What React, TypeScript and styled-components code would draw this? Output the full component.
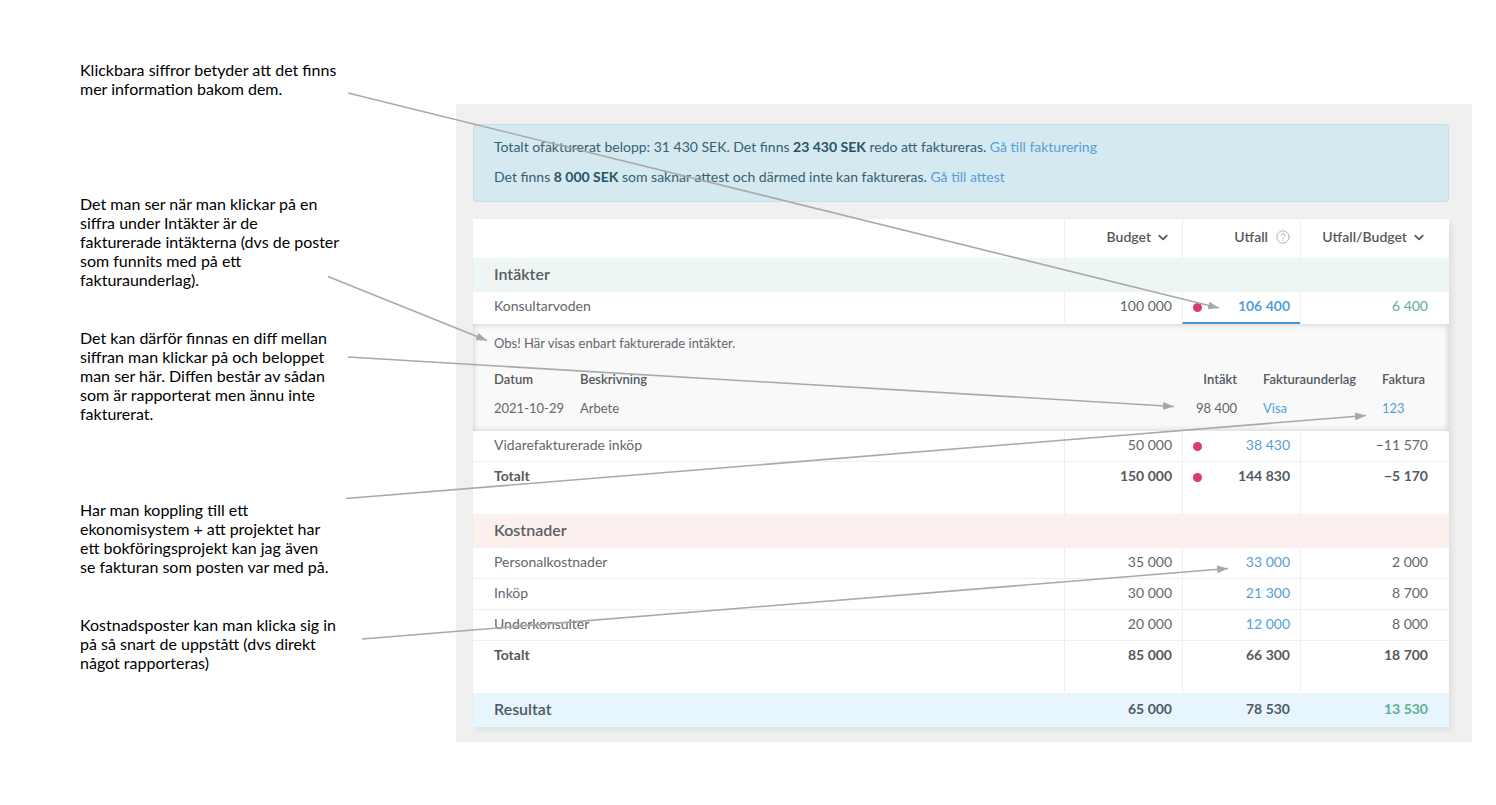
import React from 'react';
import styled, { createGlobalStyle, css } from 'styled-components';

const GlobalStyle = createGlobalStyle`
  * { box-sizing: border-box; }
  body {
    margin: 0;
    background: #ffffff;
    color: #000000;
    font-family: Lato, "Open Sans", sans-serif;
  }
`;

const Page = styled.main`
  position: relative;
  display: flex;
  align-items: flex-start;
  min-width: 1100px;
  padding-bottom: 63px;
`;

const Notes = styled.aside`
  flex: 0 0 456px;
  padding: 60px 0 0 80px;
`;

const Note = styled.p<{ $after: number }>`
  margin: 0 0 ${(p) => p.$after}px;
  font-size: 16px;
  line-height: 19px;
  white-space: pre-line;
`;

const Panel = styled.section`
  flex: 1;
  min-width: 0;
  margin: 104px 24px 0 0;
  padding: 20px 23px 15px 17px;
  background: #f0f0f0;
`;

const Alert = styled.div`
  display: flex;
  flex-direction: column;
  gap: 10px;
  margin-bottom: 17px;
  padding: 12px 20px 14px;
  border: 1px solid #c3e0e9;
  border-radius: 4px;
  background: #d5e9f1;
  color: #35606f;
  font-size: 14px;
  line-height: 20px;
`;

const AlertLine = styled.p`
  margin: 0;
`;

const Strong = styled.strong`
  font-weight: 700;
  color: #275463;
`;

const Link = styled.a`
  color: #559fd8;
  text-decoration: none;
`;

const Table = styled.table`
  width: 100%;
  table-layout: fixed;
  border-collapse: separate;
  border-spacing: 0;
  background: #ffffff;
  box-shadow: 3px 4px 6px rgba(0, 0, 0, 0.07);
  color: #63676c;
  font-size: 14px;
  line-height: 20px;
`;

const Col = styled.col<{ $width?: number }>`
  ${(p) => p.$width && css`width: ${p.$width}px;`}
`;

const HeadCell = styled.th`
  height: 39px;
  padding: 0 10px 4px 0;
  border-left: 1px solid #efefef;
  text-align: right;
  &:first-child { border-left: 0; }
  &:last-child { padding-right: 21px; }
`;

const HeadButton = styled.button`
  display: inline-flex;
  align-items: center;
  gap: 3px;
  padding: 0;
  border: 0;
  background: none;
  color: #54585d;
  font: inherit;
  font-weight: 600;
  line-height: 20px;
  vertical-align: middle;
`;

const HeadLabel = styled.span`
  display: inline-flex;
  align-items: center;
  gap: 8px;
  color: #54585d;
  font-weight: 600;
  vertical-align: middle;
`;

const HelpButton = styled.button`
  display: flex;
  padding: 0;
  border: 0;
  background: none;
`;

const SectionCell = styled.th<{ $tone: string }>`
  padding: 6px 21px 8px;
  background: ${(p) => p.$tone};
  color: #5a5e63;
  font-size: 16px;
  font-weight: 600;
  text-align: left;
`;

type Kind = 'line' | 'open' | 'total' | 'result';

const Row = styled.tr<{ $kind: Kind }>`
  > th, > td {
    padding: 4px 10px 6px;
    border-left: 1px solid #eeeff0;
    vertical-align: top;
    font-weight: 400;
    text-align: right;
  }
  > th {
    padding-left: 21px;
    border-left: 0;
    text-align: left;
  }
  > td:last-child { padding-right: 21px; }

  ${(p) => p.$kind === 'line' && css`
    > th, > td { border-bottom: 1px solid #eeeff0; }
  `}
  ${(p) => p.$kind === 'open' && css`
    > th, > td { border-bottom: 2px solid #ffffff; }
    > td:nth-child(3) {
      border-bottom-color: #4b93d3;
      font-weight: 700;
    }
  `}
  ${(p) => p.$kind === 'total' && css`
    > th, > td {
      padding-bottom: 28px;
      color: #55595e;
      font-weight: 700;
    }
  `}
  ${(p) => p.$kind === 'result' && css`
    > th, > td {
      padding-top: 6px;
      padding-bottom: 8px;
      border-left-color: #e7f5fe;
      background: #e7f5fe;
      color: #505962;
      font-weight: 700;
    }
    > th {
      font-size: 16px;
      font-weight: 600;
    }
  `}
`;

const Flagged = styled.div`
  display: flex;
  align-items: center;
  justify-content: space-between;
`;

const Dot = styled.span`
  width: 9px;
  height: 9px;
  margin-top: 2px;
  border-radius: 50%;
  background: #d93b72;
`;

const Positive = styled.span`
  color: #62b08c;
`;

const DetailCell = styled.td`
  padding: 9px 21px 13px;
  background: #f9f9f9;
  box-shadow: inset 0 0 6px rgba(0, 0, 0, 0.2);
  font-size: 13px;
`;

const DetailNote = styled.p`
  margin: 0 0 16px;
`;

const DetailTable = styled.table`
  width: 100%;
  table-layout: fixed;
  border-collapse: collapse;
  th, td {
    padding: 0;
    text-align: left;
  }
  th {
    padding-bottom: 9px;
    color: #54585d;
    font-weight: 600;
  }
  th:nth-child(3), td:nth-child(3) {
    padding-right: 26px;
    text-align: right;
  }
`;

const ArrowLayer = styled.svg`
  position: absolute;
  top: 0;
  left: 0;
  width: 100%;
  height: 805px;
  pointer-events: none;
`;

const Chevron = () => (
  <svg width="18" height="18" viewBox="0 0 18 18" fill="none" stroke="#54585d" strokeWidth="1.8" strokeLinecap="round" strokeLinejoin="round" aria-hidden="true">
    <path d="M5.2 7.6 9 11.3l3.8-3.7" />
  </svg>
);

const Help = () => (
  <svg width="14" height="14" viewBox="0 0 14 14" fill="none" stroke="#b0b3b6" strokeLinecap="round" aria-hidden="true">
    <circle cx="7" cy="7" r="6.2" />
    <path d="M5.2 5.6a1.8 1.8 0 1 1 2.6 1.5c-.6.3-.8.6-.8 1.2" />
    <circle cx="7" cy="10.1" r=".7" fill="#b0b3b6" stroke="none" />
  </svg>
);

const notes = [
  { text: 'Klickbara siffror betyder att det finns\nmer information bakom dem.', after: 96 },
  { text: 'Det man ser när man klickar på en\nsiffra under Intäkter är de\nfakturerade intäkterna (dvs de poster\nsom funnits med på ett\nfakturaunderlag).', after: 39 },
  { text: 'Det kan därför finnas en diff mellan\nsiffran man klickar på och beloppet\nman ser här. Diffen består av sådan\nsom är rapporterat men ännu inte\nfakturerat.', after: 77 },
  { text: 'Har man koppling till ett\nekonomisystem + att projektet har\nett bokföringsprojekt kan jag även\nse fakturan som posten var med på.', after: 39 },
  { text: 'Kostnadsposter kan man klicka sig in\npå så snart de uppstått (dvs direkt\nnågot rapporteras)', after: 0 },
];

const arrows = [
  [348, 93, 1219, 308],
  [328, 276.5, 487, 340.5],
  [348, 357, 1174, 406.5],
  [346, 498.5, 1366, 415.5],
  [362, 639, 1228, 568.5],
];

type BudgetRowProps = {
  kind: Kind;
  label: string;
  budget: string;
  outcome: string;
  diff: string;
  linked?: boolean;
  flagged?: boolean;
  positive?: boolean;
};

function BudgetRow({ kind, label, budget, outcome, diff, linked, flagged, positive }: BudgetRowProps) {
  const value = linked ? <Link href="#">{outcome}</Link> : outcome;
  return (
    <Row $kind={kind}>
      <th scope="row">{label}</th>
      <td>{budget}</td>
      <td>{flagged ? <Flagged><Dot /><span>{value}</span></Flagged> : value}</td>
      <td>{positive ? <Positive>{diff}</Positive> : diff}</td>
    </Row>
  );
}

function InvoicedDetail() {
  return (
    <tr>
      <DetailCell colSpan={4}>
        <DetailNote>Obs! Här visas enbart fakturerade intäkter.</DetailNote>
        <DetailTable>
          <colgroup>
            <Col $width={86} />
            <Col />
            <Col $width={110} />
            <Col $width={119} />
            <Col $width={46} />
          </colgroup>
          <thead>
            <tr>
              <th scope="col">Datum</th>
              <th scope="col">Beskrivning</th>
              <th scope="col">Intäkt</th>
              <th scope="col">Fakturaunderlag</th>
              <th scope="col">Faktura</th>
            </tr>
          </thead>
          <tbody>
            <tr>
              <td>2021-10-29</td>
              <td>Arbete</td>
              <td>98 400</td>
              <td><Link href="#">Visa</Link></td>
              <td><Link href="#">123</Link></td>
            </tr>
          </tbody>
        </DetailTable>
      </DetailCell>
    </tr>
  );
}

export default function App() {
  return (
    <>
      <GlobalStyle />
      <Page>
        <Notes>
          {notes.map((n) => <Note key={n.text} $after={n.after}>{n.text}</Note>)}
        </Notes>
        <Panel>
          <Alert>
            <AlertLine>
              Totalt ofakturerat belopp: 31 430 SEK. Det finns <Strong>23 430 SEK</Strong> redo att faktureras. <Link href="#">Gå till fakturering</Link>
            </AlertLine>
            <AlertLine>
              Det finns <Strong>8 000 SEK</Strong> som saknar attest och därmed inte kan faktureras. <Link href="#">Gå till attest</Link>
            </AlertLine>
          </Alert>
          <Table>
            <colgroup>
              <Col />
              <Col $width={118} />
              <Col $width={118} />
              <Col $width={149} />
            </colgroup>
            <thead>
              <tr>
                <HeadCell />
                <HeadCell scope="col"><HeadButton type="button">Budget<Chevron /></HeadButton></HeadCell>
                <HeadCell scope="col">
                  <HeadLabel>Utfall<HelpButton type="button" aria-label="Hjälp"><Help /></HelpButton></HeadLabel>
                </HeadCell>
                <HeadCell scope="col"><HeadButton type="button">Utfall/Budget<Chevron /></HeadButton></HeadCell>
              </tr>
            </thead>
            <tbody>
              <tr><SectionCell colSpan={4} $tone="#eef6f4">Intäkter</SectionCell></tr>
              <BudgetRow kind="open" label="Konsultarvoden" budget="100 000" outcome="106 400" diff="6 400" linked flagged positive />
              <InvoicedDetail />
              <BudgetRow kind="line" label="Vidarefakturerade inköp" budget="50 000" outcome="38 430" diff="−11 570" linked flagged />
              <BudgetRow kind="total" label="Totalt" budget="150 000" outcome="144 830" diff="−5 170" flagged />
              <tr><SectionCell colSpan={4} $tone="#fcf0ee">Kostnader</SectionCell></tr>
              <BudgetRow kind="line" label="Personalkostnader" budget="35 000" outcome="33 000" diff="2 000" linked />
              <BudgetRow kind="line" label="Inköp" budget="30 000" outcome="21 300" diff="8 700" linked />
              <BudgetRow kind="line" label="Underkonsulter" budget="20 000" outcome="12 000" diff="8 000" linked />
              <BudgetRow kind="total" label="Totalt" budget="85 000" outcome="66 300" diff="18 700" />
              <BudgetRow kind="result" label="Resultat" budget="65 000" outcome="78 530" diff="13 530" positive />
            </tbody>
          </Table>
        </Panel>
        <ArrowLayer viewBox="0 0 1496 805" preserveAspectRatio="none" aria-hidden="true">
          <defs>
            <marker id="head" markerUnits="userSpaceOnUse" markerWidth="12" markerHeight="8" refX="11" refY="4" orient="auto">
              <path d="M0 0 11 4 0 8z" fill="#a9a9a9" />
            </marker>
          </defs>
          {arrows.map(([x1, y1, x2, y2]) => (
            <line key={y1} x1={x1} y1={y1} x2={x2} y2={y2} stroke="#a9a9a9" strokeWidth="1.6" markerEnd="url(#head)" />
          ))}
        </ArrowLayer>
      </Page>
    </>
  );
}
